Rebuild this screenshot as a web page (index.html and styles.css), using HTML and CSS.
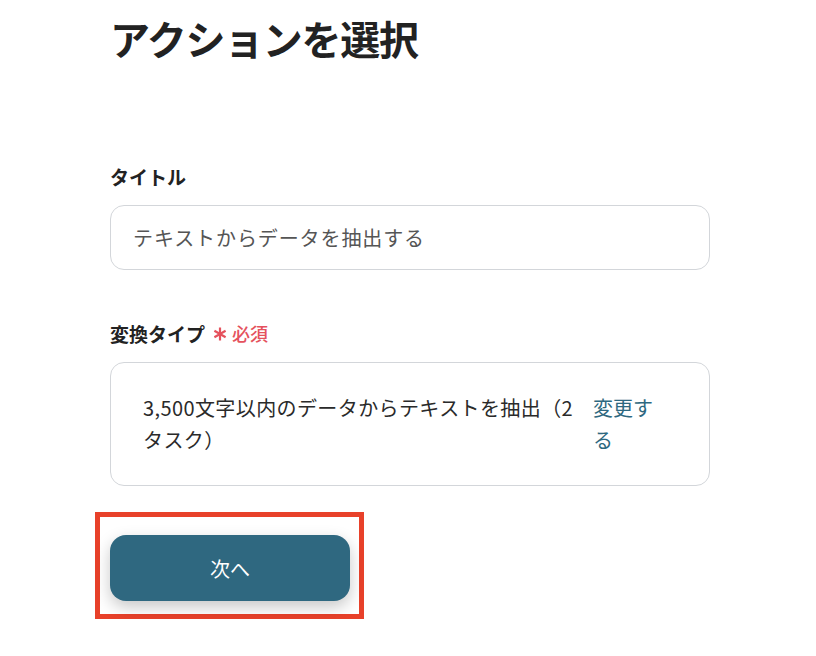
FILE: index.html
```html
<!DOCTYPE html>
<html lang="ja">
<head>
<meta charset="utf-8">
<title>アクションを選択</title>
<link rel="stylesheet" href="styles.css">
</head>
<body>
<main class="page">
  <h1 class="title">アクションを選択</h1>

  <section class="field field-title">
    <label class="label">タイトル</label>
    <div class="input">テキストからデータを抽出する</div>
  </section>

  <section class="field field-type">
    <div class="label">変換タイプ<span class="req"><svg class="star" viewBox="0 0 14 14" width="14" height="14"><g stroke="#e5525d" stroke-width="2.2" stroke-linecap="butt"><line x1="7" y1="0.5" x2="7" y2="13.5"/><line x1="1.4" y1="3.75" x2="12.6" y2="10.25"/><line x1="1.4" y1="10.25" x2="12.6" y2="3.75"/></g></svg>必須</span></div>
    <div class="select-box">
      <div class="select-text">3,500文字以内のデータからテキストを抽出（2タスク）</div>
      <a class="change-link">変更する</a>
    </div>
  </section>

  <div class="highlight">
    <button class="next-btn">次へ</button>
  </div>
</main>
</body>
</html>
```

FILE: styles.css
```css
* { box-sizing: border-box; }
html, body {
  margin: 0;
  padding: 0;
  background: #ffffff;
}
body {
  font-family: "Noto Sans CJK JP", "Noto Sans", sans-serif;
  color: #222222;
}
.page {
  width: 600px;
  margin-left: 110px;
  padding-top: 10px;
}
.title {
  margin: 0;
  font-size: 40px;
  line-height: 56px;
  font-weight: 700;
  color: #222222;
  letter-spacing: -1.3px;
}
.field-title {
  margin-top: 97px;
}
.field-type {
  margin-top: 50px;
}
.label {
  display: flex;
  align-items: center;
  font-size: 19px;
  line-height: 27px;
  font-weight: 700;
  color: #222222;
  margin-bottom: 15px;
}
.req {
  display: inline-flex;
  align-items: center;
  margin-left: 8px;
  color: #e5525d;
  font-size: 18px;
  font-weight: 500;
}
.star {
  display: block;
  margin-right: 5px;
  margin-top: 1px;
}
.input {
  height: 65px;
  border: 1px solid #d3d6da;
  border-radius: 14px;
  padding: 0 22px;
  display: flex;
  align-items: center;
  font-size: 20px;
  color: #555555;
  letter-spacing: 0.9px;
}
.select-box {
  height: 124px;
  border: 1px solid #d3d6da;
  border-radius: 14px;
  padding: 0 48px 0 32px;
  display: flex;
  align-items: center;
  gap: 14px;
  font-size: 20px;
  line-height: 32px;
}
.select-text {
  flex: 1;
  color: #2a2a2a;
  letter-spacing: 0.4px;
}
.change-link {
  width: 68px;
  color: #2e6880;
  cursor: pointer;
}
.highlight {
  display: inline-block;
  margin-top: 26px;
  margin-left: -15px;
  border: 5px solid #e8412a;
  padding: 18px 9px 13px 10px;
}
.next-btn {
  display: block;
  width: 240px;
  height: 66px;
  border: none;
  border-radius: 16px;
  background: #2f6880;
  color: #ffffff;
  font-family: "Noto Sans CJK JP", "Noto Sans", sans-serif;
  font-size: 20px;
  box-shadow: 0 6px 16px rgba(0, 0, 0, 0.22);
  cursor: pointer;
}
```
